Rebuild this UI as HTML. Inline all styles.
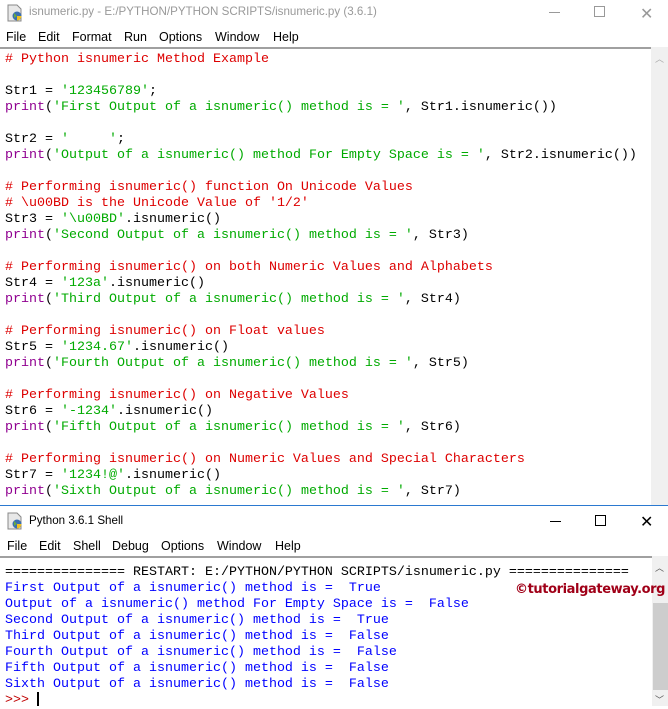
<!DOCTYPE html>
<html><head><meta charset="utf-8"><style>
*{margin:0;padding:0;box-sizing:border-box}
body{width:668px;height:706px;background:#fff;position:relative;overflow:hidden;font-family:"Liberation Sans",sans-serif}
.abs{position:absolute}
.title{font-size:11.6px;color:#999;}
.m{position:absolute;font-size:12.5px;color:#000;white-space:pre}
pre{font-family:"Liberation Mono",monospace;font-size:13.33px;line-height:16px;white-space:pre}
.c{color:#dd0000}.s{color:#00aa00}.k{color:#900090}.b{color:#0000ff}
</style></head><body>
<!-- editor window -->
<svg class="abs" style="left:6px;top:4px" width="18" height="18"><path d="M2 1h9l4 4v12H2z" fill="#e8e8e8" stroke="#888"/><circle cx="11" cy="12" r="4.5" fill="#3a6fb0"/><path d="M11 12h4.5a4.5 4.5 0 0 1-4.5 4.5z" fill="#f0c020"/><path d="M8 9l3 3-3 2" fill="#6a4"/></svg>
<div class="abs title" style="left:29px;top:5px;">isnumeric.py - E:/PYTHON/PYTHON SCRIPTS/isnumeric.py (3.6.1)</div>
<div class="abs" style="left:549px;top:12px;width:11px;height:1px;background:#999"></div>
<div class="abs" style="left:594px;top:6px;width:11px;height:11px;border:1px solid #999"></div>
<div class="abs" style="left:640px;top:4px;font-size:16px;color:#999">✕</div>
<div class="m" style="left:6px;top:30px">File</div>
<div class="m" style="left:38px;top:30px">Edit</div>
<div class="m" style="left:72px;top:30px">Format</div>
<div class="m" style="left:124px;top:30px">Run</div>
<div class="m" style="left:159px;top:30px">Options</div>
<div class="m" style="left:215px;top:30px">Window</div>
<div class="m" style="left:273px;top:30px">Help</div>
<div class="abs" style="left:0;top:47px;width:651px;height:2px;background:#a0a0a0"></div>
<div class="abs" style="left:651px;top:47px;width:17px;height:458px;background:#f0f0f0"></div>
<div class="abs" style="left:655px;top:52px;font-size:9px;color:#aaa">︿</div>
<pre class="abs" style="left:5px;top:52px"><span class="c"># Python isnumeric Method Example</span>

Str1 = <span class="s">'123456789'</span>;
<span class="k">print</span>(<span class="s">'First Output of a isnumeric() method is = '</span>, Str1.isnumeric())

Str2 = <span class="s">'     '</span>;
<span class="k">print</span>(<span class="s">'Output of a isnumeric() method For Empty Space is = '</span>, Str2.isnumeric())

<span class="c"># Performing isnumeric() function On Unicode Values</span>
<span class="c"># \u00BD is the Unicode Value of '1/2'</span>
Str3 = <span class="s">'\u00BD'</span>.isnumeric()
<span class="k">print</span>(<span class="s">'Second Output of a isnumeric() method is = '</span>, Str3)

<span class="c"># Performing isnumeric() on both Numeric Values and Alphabets</span>
Str4 = <span class="s">'123a'</span>.isnumeric()
<span class="k">print</span>(<span class="s">'Third Output of a isnumeric() method is = '</span>, Str4)

<span class="c"># Performing isnumeric() on Float values</span>
Str5 = <span class="s">'1234.67'</span>.isnumeric()
<span class="k">print</span>(<span class="s">'Fourth Output of a isnumeric() method is = '</span>, Str5)

<span class="c"># Performing isnumeric() on Negative Values</span>
Str6 = <span class="s">'-1234'</span>.isnumeric()
<span class="k">print</span>(<span class="s">'Fifth Output of a isnumeric() method is = '</span>, Str6)

<span class="c"># Performing isnumeric() on Numeric Values and Special Characters</span>
Str7 = <span class="s">'1234!@'</span>.isnumeric()
<span class="k">print</span>(<span class="s">'Sixth Output of a isnumeric() method is = '</span>, Str7)</pre>
<!-- shell window -->
<div class="abs" style="left:0;top:505px;width:668px;height:1px;background:#2b79d0"></div>
<svg class="abs" style="left:6px;top:512px" width="18" height="18"><path d="M2 1h9l4 4v12H2z" fill="#e8e8e8" stroke="#888"/><circle cx="11" cy="12" r="4.5" fill="#3a6fb0"/><path d="M11 12h4.5a4.5 4.5 0 0 1-4.5 4.5z" fill="#f0c020"/><path d="M8 9l3 3-3 2" fill="#6a4"/></svg>
<div class="abs" style="left:29px;top:514px;font-size:11.6px;color:#000">Python 3.6.1 Shell</div>
<div class="abs" style="left:550px;top:521px;width:11px;height:1px;background:#000"></div>
<div class="abs" style="left:595px;top:515px;width:11px;height:11px;border:1px solid #000"></div>
<div class="abs" style="left:640px;top:512px;font-size:16px;color:#000">✕</div>
<div class="m" style="left:7px;top:539px">File</div>
<div class="m" style="left:39px;top:539px">Edit</div>
<div class="m" style="left:73px;top:539px">Shell</div>
<div class="m" style="left:112px;top:539px">Debug</div>
<div class="m" style="left:161px;top:539px">Options</div>
<div class="m" style="left:217px;top:539px">Window</div>
<div class="m" style="left:275px;top:539px">Help</div>
<div class="abs" style="left:0;top:556px;width:652px;height:2px;background:#a0a0a0"></div>
<div class="abs" style="left:652px;top:556px;width:16px;height:150px;background:#f0f0f0"></div>
<div class="abs" style="left:653px;top:603px;width:15px;height:87px;background:#cdcdcd"></div>
<div class="abs" style="left:655px;top:561px;font-size:9px;color:#555">︿</div>
<div class="abs" style="left:655px;top:693px;font-size:9px;color:#555">﹀</div>
<pre class="abs" style="left:5px;top:565px">=============== RESTART: E:/PYTHON/PYTHON SCRIPTS/isnumeric.py ===============
<span class="b">First Output of a isnumeric() method is =  True
Output of a isnumeric() method For Empty Space is =  False
Second Output of a isnumeric() method is =  True
Third Output of a isnumeric() method is =  False
Fourth Output of a isnumeric() method is =  False
Fifth Output of a isnumeric() method is =  False
Sixth Output of a isnumeric() method is =  False</span>
<span style="color:#c00000">&gt;&gt;&gt;</span> </pre>
<div class="abs" style="left:37px;top:692px;width:2px;height:14px;background:#000"></div>
<div class="abs" style="left:515px;top:582px;font-size:13px;font-weight:bold;color:#a00018;font-family:'DejaVu Sans',sans-serif;letter-spacing:-0.4px;white-space:nowrap">©tutorialgateway.org</div>
</body></html>
